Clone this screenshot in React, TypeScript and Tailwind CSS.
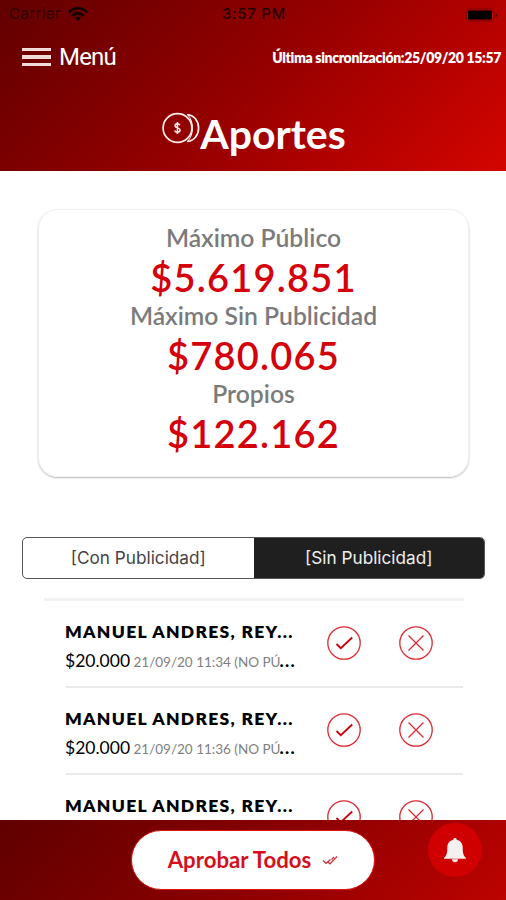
import { ReactNode } from 'react'

interface Aporte {
  id: number
  name: string
  amount?: string
  detail?: string
}

const totals = [
  { label: 'Máximo Público', value: '$5.619.851' },
  { label: 'Máximo Sin Publicidad', value: '$780.065' },
  { label: 'Propios', value: '$122.162' }
]

const aportes: Aporte[] = [
  { id: 1, name: 'MANUEL ANDRES, REY', amount: '$20.000', detail: '21/09/20 11:34 (NO PÚ' },
  { id: 2, name: 'MANUEL ANDRES, REY', amount: '$20.000', detail: '21/09/20 11:36 (NO PÚ' },
  { id: 3, name: 'MANUEL ANDRES, REY' }
]

function StatusBar() {
  return (
    <div className="flex h-7 items-center justify-between pl-[9px] pr-[7px] pt-px font-['Inter'] text-[15px] text-black/75">
      <div className="flex w-40 items-center gap-[7px]">
        <span className="tracking-[0.4px] text-black/60">Carrier</span>
        <svg width="20" height="15" viewBox="0 0 20 15" fill="none" stroke="#0c0000" strokeWidth="2.7">
          <path d="M1 5.2C6-.1 14-.1 19 5.2" />
          <path d="M4.3 8.7c3.2-3.2 8.2-3.2 11.4 0" />
          <path d="M7 10.8c1.8-1.5 4.2-1.5 6 0l-3 3.2z" fill="#0c0000" stroke="none" />
        </svg>
      </div>
      <span className="font-medium tracking-[0.7px]">3:57 PM</span>
      <div className="flex w-40 justify-end">
        <svg width="34" height="14" viewBox="0 0 34 14">
          <rect x="1" y="1" width="28" height="12" rx="3" fill="none" stroke="#5c0000" strokeOpacity=".6" />
          <rect x="3" y="2.500" width="24" height="9" rx="1" fill="#000" />
          <path d="M31.500 6v2.500" stroke="#5c0000" strokeWidth="1.500" />
        </svg>
      </div>
    </div>
  )
}

function CoinsIcon() {
  return (
    <svg width="38" height="32" viewBox="0 0 38 32" fill="none" stroke="#fff0f0" strokeWidth="1.7">
      <circle cx="15.5" cy="16" r="14.4" />
      <path d="M25 2.500C32 3 36.600 9 36.600 16S32 29 25 29.500" />
      <path d="M26 3c6 7 6 19 0 26" strokeWidth="1" />
      <path
        d="M17.900 13.200c-.6-1.100-1.400-1.500-2.500-1.500-1.500 0-2.400.8-2.400 2 0 2.800 5.100 1.600 5.100 4.400 0 1.300-1.100 2.200-2.700 2.200-1.300 0-2.300-.5-2.800-1.700M15.400 10v12"
        strokeWidth="1.500"
      />
    </svg>
  )
}

function CircleButton({ label, children }: { label: string; children: ReactNode }) {
  return (
    <button aria-label={label} className="size-[34px]">
      <svg width="34" height="34" viewBox="0 0 34 34" fill="none" stroke="#dc2a32">
        <circle cx="17" cy="17" r="16.200" strokeWidth="1.300" />
        {children}
      </svg>
    </button>
  )
}

function AporteRow({ aporte }: { aporte: Aporte }) {
  return (
    <li className="ml-[66px] mr-[43px] flex h-[87px] border-b-2 border-[#e9e9e9]">
      <div className="w-[261px] whitespace-nowrap pt-[17px] text-black">
        <p className="-ml-px text-[17.500px] font-extrabold leading-[28px] tracking-[1.300px]">{aporte.name}...</p>
        {aporte.amount && (
          <p className="-ml-px text-[17.500px] leading-[29px]">
            {aporte.amount} <span className="-ml-px text-[13.500px] text-[#808080]">{aporte.detail}</span>
            <b className="-ml-px font-black tracking-[1.300px]">...</b>
          </p>
        )}
      </div>
      <div className="flex gap-[38px] pt-[25px]">
        <CircleButton label="Aprobar">
          <path d="M9.500 18l4.300 4.200L25.200 11.500" stroke="#c8000b" strokeWidth="1.800" />
        </CircleButton>
        <CircleButton label="Rechazar">
          <path d="M9.500 9.500l15 15M24.500 9.500l-15 15" strokeWidth="1.300" />
        </CircleButton>
      </div>
    </li>
  )
}

export default function App() {
  return (
    <div className="flex h-[900px] w-[506px] flex-col overflow-hidden bg-white font-['Lato','Liberation_Sans',sans-serif]">
      <header className="h-[171px] shrink-0 bg-linear-135 from-[#620000] via-[#960000] to-[#d40500] text-white">
        <StatusBar />
        <div className="flex h-[58px] items-center justify-between pl-[22px] pr-[5px]">
          <button className="flex items-center gap-2">
            <span className="flex w-[29px] flex-col gap-1">
              <i className="h-[3.500px] bg-[#f2dada]" />
              <i className="h-[3.500px] bg-[#f2dada]" />
              <i className="h-[3.500px] bg-[#f2dada]" />
            </span>
            <span className="font-['Roboto'] text-[24px] tracking-[-0.800px]">Menú</span>
          </button>
          <span className="text-[14px] font-extrabold tracking-[-0.340px]">Última sincronización:25/09/20 15:57</span>
        </div>
        <div className="flex h-[85px] items-start justify-center pl-[2px] pt-[26px]">
          <CoinsIcon />
          <h1 className="text-[41px] font-bold leading-[44px]">Aportes</h1>
        </div>
      </header>

      <main className="min-h-0 flex-1 overflow-hidden">
        {/* Totales */}
        <section className="ml-[38px] mr-[37px] mt-[38px] h-[268px] rounded-[20px] border border-[#f0f0f0] pt-[12px] text-center shadow-[0_1px_2px_rgba(0,0,0,0.28)]">
          {totals.map((total) => (
            <div key={total.label} className="h-[78px]">
              <p className="text-[24.700px] font-semibold leading-[31px] text-[#7b7b7b]">{total.label}</p>
              <p className="text-[38px] font-semibold leading-[48px] tracking-[1.200px] text-[#d4000b]">{total.value}</p>
            </div>
          ))}
        </section>

        {/* Selector de publicidad */}
        <div className="ml-[22px] mr-[21px] mt-[60px] flex h-[42px] overflow-hidden rounded-[5px] border border-[#555] font-['Inter'] text-[17.200px]">
          <button className="flex-1 text-[#444]">[Con Publicidad]</button>
          <button className="flex-1 bg-[#1f1f1f] text-[#eee]">[Sin Publicidad]</button>
        </div>

        <div className="ml-[44px] mr-[42px] mt-[19px] h-[3px] bg-[#f2f2f2]" />
        <ul>
          {aportes.map((aporte) => (
            <AporteRow key={aporte.id} aporte={aporte} />
          ))}
        </ul>
      </main>

      <footer className="relative flex h-20 shrink-0 justify-center bg-linear-135 from-[#600000] via-[#8a0000] to-[#bc0300] pt-[10px]">
        <button className="flex h-[60px] w-[244px] items-center justify-center gap-[11px] rounded-full border border-[#e51414] bg-white text-[22.200px] font-bold text-[#d4101a]">
          Aprobar Todos
          <svg width="16" height="11" viewBox="0 0 16 11" fill="none" stroke="#cf2830" strokeWidth="1.200">
            <path d="M1 5.500l3 3 4.500-4M5.500 6.500l2.500 2.500L15 1.500M9.500 4.500L12 2" />
          </svg>
        </button>
        <button aria-label="Notificaciones" className="absolute left-[428px] top-[3px] flex size-[54px] items-center justify-center rounded-full bg-[#d10000]">
          <svg width="24" height="27" viewBox="0 0 24 27" fill="#f6f1f1">
            <path d="M12 1c1 0 1.700.7 1.700 1.700 3.800.8 6 3.800 6 7.800 0 6 .8 8 3.300 10.500v.7H1V21c2.500-2.500 3.300-4.500 3.300-10.500 0-4 2.200-7 6-7.800C10.300 1.700 11 1 12 1zM8.800 22.300h6.400c-.4 2-1.600 3-3.200 3s-2.800-1-3.200-3z" />
          </svg>
        </button>
      </footer>
    </div>
  )
}
